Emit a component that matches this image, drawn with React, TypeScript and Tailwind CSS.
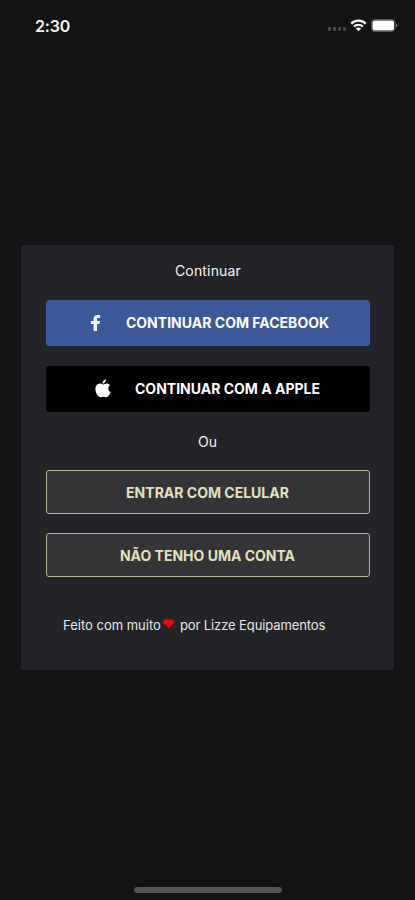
import type { ReactNode } from 'react';
import { clsx } from 'clsx';

function StatusBar() {
  return (
    <header className="flex h-[51px] items-center justify-between pl-[35px] pr-[17px]">
      <span className="text-[16px] font-semibold leading-5 tracking-[-0.2px] text-[#f4f4f4]">2:30</span>
      <div className="flex items-center">
        {/* Signal */}
        <div className="mr-[4px] mt-[7px] flex gap-[2px]">
          {[1, 2, 3, 4].map((i) => (
            <span key={i} className="h-[4px] w-[3px] rounded-[1px] bg-[#48484a]" />
          ))}
        </div>
        {/* Wifi */}
        <svg className="mr-[4px] h-[13px] w-[17px]" viewBox="0 0 17 13" fill="none">
          <path d="M1.3 4.6a10.3 10.3 0 0 1 14.4 0" stroke="#fff" strokeWidth="2.2" />
          <path d="M4 7.5a6.5 6.5 0 0 1 9 0" stroke="#fff" strokeWidth="2" />
          <path d="M5.9 9.6a3.9 3.9 0 0 1 5.2 0L8.5 12.3z" fill="#fff" />
        </svg>
        {/* Battery */}
        <svg className="h-[13px] w-[27px]" viewBox="0 0 27 13" fill="none">
          <rect x="0.5" y="0.5" width="23.5" height="12" rx="3" stroke="#5a5a5c" />
          <rect x="1.5" y="1.5" width="21.5" height="10" rx="2" fill="#fff" />
          <path d="M25 4.5a2.1 2.1 0 0 1 0 4z" fill="#77777a" />
        </svg>
      </div>
    </header>
  );
}

function FacebookIcon() {
  return (
    <svg className="h-4 w-[11px]" viewBox="0 0 320 512" preserveAspectRatio="none" fill="#fff">
      <path d="M279.14 288l14.22-92.66h-88.91v-60.13c0-25.35 12.42-50.06 52.24-50.06h40.42V6.26S260.43 0 225.36 0c-73.22 0-121.08 44.38-121.08 124.72v70.62H22.89V288h81.39v224h100.17V288z" />
    </svg>
  );
}

function AppleIcon() {
  return (
    <svg className="mb-px h-[19px] w-4" viewBox="0 0 16 19" fill="#fff">
      <path d="M10.9.2c.2 1.4-.4 2.5-1.1 3.2-.6.8-1.5 1.2-2.3 1.2-.1-1.2.4-2.3 1.1-3.1C9.2.8 10.1.3 10.9.2z" />
      <path d="M14.9 6.2c-1.1.8-1.6 2-1.6 3.3 0 1.6.8 2.9 2.3 3.6-.5 1.4-1.1 2.6-2 3.7-.7.8-1.4 1.4-2.3 1.4-1 0-1.6-.5-2.9-.5s-2 .5-2.9.5c-1 0-1.700-.6-2.400-1.400C1.500 15 .4 12.700.4 10.200c0-3.500 2.200-5.600 4.600-5.600 1.400 0 2.400.8 3.300.8.9 0 2.200-.9 3.800-.9 1.200 0 2.200.7 2.800 1.700z" />
    </svg>
  );
}

type ButtonProps = {
  children: ReactNode;
  className?: string;
};

function Button({ children, className }: ButtonProps) {
  return (
    <button
      type="button"
      className={clsx(
        'flex w-full items-center justify-center whitespace-nowrap rounded-[3px] text-[14px] font-bold leading-5',
        className
      )}
    >
      {children}
    </button>
  );
}

export default function App() {
  return (
    <div className="flex h-[900px] w-[415px] flex-col overflow-hidden bg-[#131315] font-[Inter,sans-serif]">
      <StatusBar />

      <main className="mx-auto mt-[194px] h-[425px] w-[373px] rounded-[3px] bg-[#242328] pl-[25px] pr-6">
        <p className="mt-4 text-center text-[14px] leading-5 tracking-[0.18px] text-[#f4f4f5]">Continuar</p>

        <Button className="mt-[19px] h-[46px] gap-[25px] bg-[#3b5998] pl-[3px] tracking-[0.02px] text-white">
          <FacebookIcon />
          CONTINUAR COM FACEBOOK
        </Button>
        <Button className="mt-5 h-[46px] gap-6 bg-black pr-px text-white">
          <AppleIcon />
          CONTINUAR COM A APPLE
        </Button>

        <p className="mt-5 pr-px text-center text-[14px] leading-5 text-[#f4f4f5]">Ou</p>

        <Button className="mt-[18px] h-[44px] border border-[#b6b795] bg-[#343436] pr-px pt-px text-[#e3e1bd]">
          ENTRAR COM CELULAR
        </Button>
        <Button className="mt-[19px] h-[44px] border border-[#b6b795] bg-[#343436] pr-px pt-px text-[#e3e1bd]">
          NÃO TENHO UMA CONTA
        </Button>

        <p className="ml-[17px] mt-[38px] flex items-center whitespace-nowrap text-[13px] leading-5 text-[#e6e6e8]">
          <span>Feito com muito</span>
          <svg className="mb-[3px] ml-[2px] mr-[6px] h-[9px] w-[11px]" viewBox="0 0 11 9" fill="#f00">
            <path d="M5.5 9L.8 4.5C0 3.5 0 2 .9 1.1 2 .1 4 .1 5.5.7 7 .1 9 .1 10.1 1.1c.9.9.9 2.4.1 3.4z" />
          </svg>
          <span className="tracking-[-0.1px]">por Lizze Equipamentos</span>
        </p>
      </main>

      <div className="mx-auto mb-[7px] mt-auto h-[6px] w-[148px] rounded-full bg-[#555556]" />
    </div>
  );
}
